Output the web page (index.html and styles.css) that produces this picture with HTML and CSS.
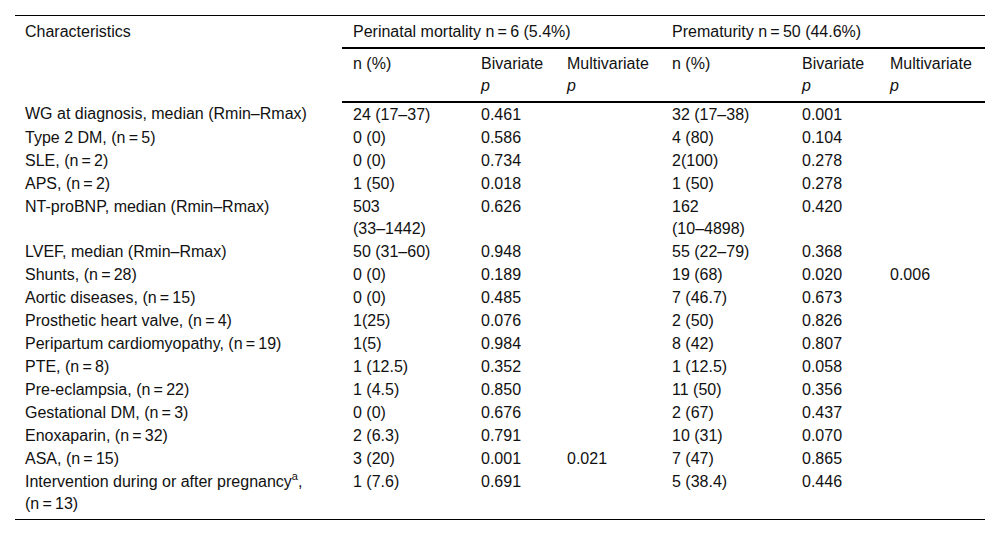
FILE: index.html
```html
<!DOCTYPE html>
<html>
<head>
<meta charset="utf-8">
<link rel="stylesheet" href="styles.css">
</head>
<body>
<table class="data">
  <colgroup>
    <col class="c1"><col class="c2"><col class="c3"><col class="c4"><col class="c5"><col class="c6"><col class="c7">
  </colgroup>
  <thead>
    <tr class="h1">
      <th rowspan="2" class="char">Characteristics</th>
      <th colspan="3" class="grp">Perinatal mortality n&#8201;=&#8201;6 (5.4%)</th>
      <th colspan="3" class="grp">Prematurity n&#8201;=&#8201;50 (44.6%)</th>
    </tr>
    <tr class="h2">
      <th>n (%)</th>
      <th>Bivariate<br><i>p</i></th>
      <th>Multivariate<br><i>p</i></th>
      <th>n (%)</th>
      <th>Bivariate<br><i>p</i></th>
      <th>Multivariate<br><i>p</i></th>
    </tr>
  </thead>
  <tbody>
    <tr><td>WG at diagnosis, median (Rmin–Rmax)</td><td>24 (17–37)</td><td>0.461</td><td></td><td>32 (17–38)</td><td>0.001</td><td></td></tr>
    <tr><td>Type 2 DM, (n&#8201;=&#8201;5)</td><td>0 (0)</td><td>0.586</td><td></td><td>4 (80)</td><td>0.104</td><td></td></tr>
    <tr><td>SLE, (n&#8201;=&#8201;2)</td><td>0 (0)</td><td>0.734</td><td></td><td>2(100)</td><td>0.278</td><td></td></tr>
    <tr><td>APS, (n&#8201;=&#8201;2)</td><td>1 (50)</td><td>0.018</td><td></td><td>1 (50)</td><td>0.278</td><td></td></tr>
    <tr><td>NT-proBNP, median (Rmin–Rmax)</td><td>503<br>(33–1442)</td><td>0.626</td><td></td><td>162<br>(10–4898)</td><td>0.420</td><td></td></tr>
    <tr><td>LVEF, median (Rmin–Rmax)</td><td>50 (31–60)</td><td>0.948</td><td></td><td>55 (22–79)</td><td>0.368</td><td></td></tr>
    <tr><td>Shunts, (n&#8201;=&#8201;28)</td><td>0 (0)</td><td>0.189</td><td></td><td>19 (68)</td><td>0.020</td><td>0.006</td></tr>
    <tr><td>Aortic diseases, (n&#8201;=&#8201;15)</td><td>0 (0)</td><td>0.485</td><td></td><td>7 (46.7)</td><td>0.673</td><td></td></tr>
    <tr><td>Prosthetic heart valve, (n&#8201;=&#8201;4)</td><td>1(25)</td><td>0.076</td><td></td><td>2 (50)</td><td>0.826</td><td></td></tr>
    <tr><td>Peripartum cardiomyopathy, (n&#8201;=&#8201;19)</td><td>1(5)</td><td>0.984</td><td></td><td>8 (42)</td><td>0.807</td><td></td></tr>
    <tr><td>PTE, (n&#8201;=&#8201;8)</td><td>1 (12.5)</td><td>0.352</td><td></td><td>1 (12.5)</td><td>0.058</td><td></td></tr>
    <tr><td>Pre-eclampsia, (n&#8201;=&#8201;22)</td><td>1 (4.5)</td><td>0.850</td><td></td><td>11 (50)</td><td>0.356</td><td></td></tr>
    <tr><td>Gestational DM, (n&#8201;=&#8201;3)</td><td>0 (0)</td><td>0.676</td><td></td><td>2 (67)</td><td>0.437</td><td></td></tr>
    <tr><td>Enoxaparin, (n&#8201;=&#8201;32)</td><td>2 (6.3)</td><td>0.791</td><td></td><td>10 (31)</td><td>0.070</td><td></td></tr>
    <tr><td>ASA, (n&#8201;=&#8201;15)</td><td>3 (20)</td><td>0.001</td><td>0.021</td><td>7 (47)</td><td>0.865</td><td></td></tr>
    <tr class="last"><td>Intervention during or after pregnancy<sup>a</sup>,<br>(n&#8201;=&#8201;13)</td><td>1 (7.6)</td><td>0.691</td><td></td><td>5 (38.4)</td><td>0.446</td><td></td></tr>
  </tbody>
</table>
</body>
</html>
```
FILE: styles.css
```css
html, body {
  margin: 0;
  padding: 0;
  background: #ffffff;
}
body {
  padding: 15px 15px 0 15px;
  font-family: "Liberation Sans", Arial, sans-serif;
  font-size: 16px;
  color: #111111;
}
.data {
  width: 970px;
  border-collapse: collapse;
  table-layout: fixed;
  border-top: 1px solid #000;
  border-bottom: 1px solid #000;
}
.c1 { width: 327px; }
.c2 { width: 128px; }
.c3 { width: 86px; }
.c4 { width: 105px; }
.c5 { width: 130px; }
.c6 { width: 88px; }
.c7 { width: 106px; }
.data th, .data td {
  text-align: left;
  vertical-align: top;
  font-weight: normal;
  line-height: 22px;
  padding: 1px 0 0 11px;
}
.data th.char {
  padding-left: 10px;
  padding-top: 5px;
}
.data td:first-child {
  padding-left: 10px;
}
.h1 th {
  padding-top: 5px;
  padding-bottom: 4px;
}
.h1 th.grp {
  border-bottom: 2px solid #000;
}
.h2 th {
  padding-top: 4px;
  padding-bottom: 4px;
  border-bottom: 2px solid #000;
}
.data i {
  font-style: italic;
}
.data sup {
  font-size: 11px;
  line-height: 0;
  vertical-align: 7px;
}
.last td {
  padding-bottom: 4px;
}
```
